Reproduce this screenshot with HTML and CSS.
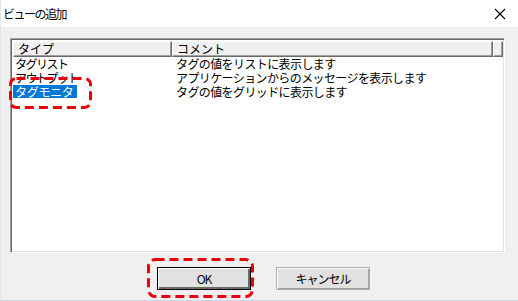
FILE: index.html
```html
<!DOCTYPE html>
<html lang="ja">
<head>
  <meta charset="UTF-8" />
  <title>ビューの追加</title>
  <link rel="stylesheet" href="styles.css">
</head>
<body>
  <div class="window">
    <div class="titlebar">
      <span class="title">ビューの追加</span>
      <svg class="close" width="12" height="12" viewBox="0 0 12 12">
        <path d="M1 1 L11 11 M11 1 L1 11" stroke="#000" stroke-width="1.1" fill="none"/>
      </svg>
    </div>
    <div class="content">
      <div class="list">
        <div class="header">
          <div class="hcell col1">タイプ</div>
          <div class="hcell col2">コメント</div>
          <div class="hcell col3"></div>
        </div>
        <div class="row">
          <div class="cell col1"><span>タグリスト</span></div>
          <div class="cell col2">タグの値をリストに表示します</div>
        </div>
        <div class="row">
          <div class="cell col1"><span>アウトプット</span></div>
          <div class="cell col2">アプリケーションからのメッセージを表示します</div>
        </div>
        <div class="row">
          <div class="cell col1"><span class="selected">タグモニタ</span></div>
          <div class="cell col2">タグの値をグリッドに表示します</div>
        </div>
      </div>
      <div class="buttons">
        <button class="btn btn-ok">OK</button>
        <button class="btn">キャンセル</button>
      </div>
    </div>

    <!-- annotation marks -->
    <svg class="mark mark-row" width="83" height="32" viewBox="0 0 83 32">
      <rect x="1.5" y="1.5" width="80" height="29" rx="6" fill="none" stroke="#e8000b" stroke-width="3" stroke-dasharray="9 5"/>
    </svg>
    <svg class="mark mark-ok" width="107" height="40" viewBox="0 0 107 40">
      <rect x="1.5" y="1.5" width="104" height="37" rx="7" fill="none" stroke="#e8000b" stroke-width="3" stroke-dasharray="9 5"/>
    </svg>
  </div>
</body>
</html>
```

FILE: styles.css
```css
body {
  margin: 0;
  font-family: "Noto Sans CJK JP", "Liberation Sans", sans-serif;
  font-size: 12px;
  color: #000;
}
.window {
  position: relative;
  width: 518px;
  height: 301px;
  background: #f0f0f0;
  box-sizing: border-box;
  border-left: 1px solid #dfe6ee;
  border-bottom: 1px solid #cdd9e6;
  overflow: hidden;
}
.titlebar {
  height: 27px;
  background: #fff;
  display: flex;
  align-items: center;
  justify-content: space-between;
  padding: 0 12px 0 2px;
}
.title { letter-spacing: -1.5px; line-height: 14px; }
.close { margin-top: 1px; }

.content { padding: 11px 13px 0 9px; }
.list {
  height: 215px;
  background: #fff;
  border-top: 1px solid #a0a0a0;
  border-left: 1px solid #a0a0a0;
  border-right: 1px solid #fff;
  border-bottom: 1px solid #fff;
  box-shadow: inset 1px 1px 0 #696969, inset -1px -1px 0 #e3e3e3;
  padding: 2px;
  box-sizing: border-box;
}
.header { display: flex; height: 16px; }
.hcell {
  box-sizing: border-box;
  background: #f0f0f0;
  border-top: 1px solid #fff;
  border-left: 1px solid #fff;
  border-right: 1px solid #696969;
  border-bottom: 1px solid #696969;
  box-shadow: inset -1px -1px 0 #a0a0a0;
  line-height: 14px;
  padding-left: 4px;
}
.col1 { width: 159px; flex: none; }
.col2 { width: 321px; flex: none; }
.col3 { width: 10px; flex: none; }
.row { display: flex; height: 14px; line-height: 14px; }
.cell { line-height: 14px; }
.cell.col1 span { display: inline-block; padding: 0 2px; letter-spacing: -1.5px; line-height: 13px; vertical-align: top; }
.cell.col1 span.selected { letter-spacing: -0.3px; padding: 0 3px 0 2px; }
.cell.col2 { padding-left: 4px; letter-spacing: -0.6px; white-space: nowrap; }
.selected { background: #0078d7; color: #fff; }

.buttons {
  display: flex;
  justify-content: center;
  gap: 25px;
  margin-top: 14px;
  padding-left: 12px;
}
.btn {
  font: inherit;
  width: 94px;
  height: 23px;
  background: #e1e1e1;
  border: 1px solid #adadad;
  border-radius: 0;
  box-shadow: inset 1px 1px 0 #fff, inset -1px -1px 0 #a0a0a0;
  padding: 0;
  letter-spacing: -1px;
}
.btn-ok {
  border: 1px solid #000;
  box-shadow: inset 1px 1px 0 #fff, inset -2px -2px 0 #696969;
}

.mark { position: absolute; }
.mark-row { left: 8px; top: 77px; }
.mark-ok { left: 146px; top: 258px; }
```
